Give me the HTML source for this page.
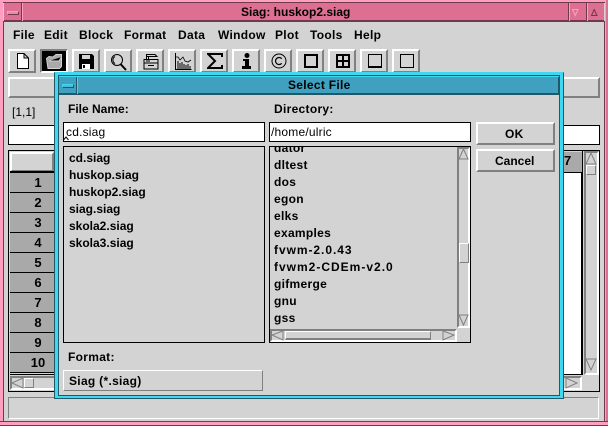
<!DOCTYPE html>
<html><head><meta charset="utf-8"><style>
html,body{margin:0;padding:0}
body{width:608px;height:426px;overflow:hidden;background:#d3d3d3;position:relative;font:bold 12px/14px "Liberation Sans",sans-serif;color:#000}
div,span,svg{position:absolute;box-sizing:border-box}
span{white-space:nowrap}
.b{border:2px solid;border-color:#fff #808080 #808080 #fff;background:#d3d3d3}
.k{border:1px solid #000}
.w{background:#fff}
.n{font-weight:normal}
.r{left:10px;width:44px;height:20px;background:#a9a9a9;border-bottom:1px solid #000;text-align:center;line-height:19px;padding-left:12px;font-size:13px}
.t{letter-spacing:.3px}
.a path{fill:#d3d3d3;stroke:#808080}
</style></head><body>

<!-- main window frame -->
<div style="left:0;top:0;width:608px;height:426px;background:#d3d3d3"></div>
<div style="left:0;top:0;width:608px;height:3px;background:#ff9ec0"></div>
<div style="left:0;top:2px;width:608px;height:1px;background:#703a4c"></div>
<div style="left:0;top:0;width:3px;height:426px;background:#ff9ec0"></div>
<div style="left:3px;top:21px;width:1px;height:400px;background:#703a4c"></div>
<div style="left:605px;top:0;width:3px;height:426px;background:#dd7092;border-left:1px solid #ff9ec0"></div>
<div style="left:604px;top:21px;width:1px;height:400px;background:#703a4c"></div>
<div style="left:0;top:421px;width:608px;height:5px;background:#ff9ec0;border-top:1px solid #703a4c;border-bottom:1px solid #703a4c"></div>

<!-- titlebar -->
<div style="left:4px;top:3px;width:600px;height:19px;background:#dd7092;border-bottom:2px solid #703a4c"></div>
<div style="left:21px;top:3px;width:1px;height:18px;background:#703a4c"></div>
<div style="left:22px;top:3px;width:1px;height:18px;background:#ff9ec0"></div>
<div style="left:7px;top:11px;width:12px;height:4px;background:#e88aa8;border:1px solid;border-color:#ff9ec0 #703a4c #703a4c #ff9ec0"></div>
<span style="left:241px;top:5px;font-size:12px;line-height:15px">Siag: huskop2.siag</span>
<div style="left:568px;top:3px;width:1px;height:18px;background:#703a4c"></div>
<div style="left:569px;top:3px;width:1px;height:18px;background:#ff9ec0"></div>
<div style="left:586px;top:3px;width:1px;height:18px;background:#703a4c"></div>
<div style="left:587px;top:3px;width:1px;height:18px;background:#ff9ec0"></div>
<svg style="left:572px;top:9px" width="32" height="8"><path d="M.5.5H6L3.2 6.5z" fill="none" stroke="#ff9ec0"/><path d="M19.5 6.5H25L22.2.5z" fill="none" stroke="#703a4c"/></svg>

<!-- menu -->
<span class="t" style="left:13px;top:28px">File</span>
<span class="t" style="left:44px;top:28px">Edit</span>
<span class="t" style="left:79px;top:28px">Block</span>
<span class="t" style="left:124px;top:28px">Format</span>
<span class="t" style="left:178px;top:28px">Data</span>
<span class="t" style="left:218px;top:28px">Window</span>
<span class="t" style="left:275px;top:28px">Plot</span>
<span class="t" style="left:310px;top:28px">Tools</span>
<span class="t" style="left:354px;top:28px">Help</span>

<!-- toolbar -->
<div class="b" style="left:8px;top:49px;width:28px;height:24px"><svg style="left:6px;top:2px" width="14" height="16"><path d="M1.5.5H8L12.5 5V15.5H1.5zM8 .5V5H12.5" fill="#fff" stroke="#000"/></svg></div>
<div style="left:40px;top:49px;width:28px;height:24px;border:2px solid;border-color:#808080 #fff #fff #808080;background:#000"><svg style="left:4px;top:2px" width="18" height="17"><path d="M2 15.5L.5 5.5 3 3.5 7 4 10 1.5 15.5 1.5V13.5L13.5 15.5z M3 8H13L15.5 4" fill="#a9a9a9" stroke="#d3d3d3"/></svg></div>
<div class="b" style="left:72px;top:49px;width:28px;height:24px"><svg style="left:5px;top:3px" width="15" height="15"><path d="M0 0H13L15 2V15H0z" fill="#000"/><path d="M3 1H11V5H3z" fill="#d3d3d3"/><path d="M3 10H11V15H3z" fill="#fff"/><path d="M4 11H6V14H4z"/></svg></div>
<div class="b" style="left:104px;top:49px;width:28px;height:24px"><svg style="left:4px;top:2px" width="18" height="18"><circle cx="7" cy="7" r="5.5" fill="none" stroke="#000"/><path d="M5 3.5A4 4 0 0 0 5 10.5" fill="none" stroke="#000"/><path d="M10.5 11L16 17" stroke="#000" stroke-width="2"/></svg></div>
<div class="b" style="left:136px;top:49px;width:28px;height:24px"><svg style="left:5px;top:2px" width="16" height="18"><path d="M3.5 6V1.5H12L14 3.5H5.5V6M1 6.5H15V16H1z M1 10H15 M4 3.5H10" fill="none" stroke="#000"/><path d="M3 8H7" stroke="#000"/><path d="M5 12.5H11" stroke="#000"/></svg></div>
<div class="b" style="left:168px;top:49px;width:28px;height:24px"><svg style="left:5px;top:2px" width="17" height="17"><path d="M.5 0V16.5H16.5" fill="none" stroke="#000"/><path d="M1 4L3 4 5 7 8 4 10 8 13 9 16 7" fill="none" stroke="#000" stroke-width=".8"/><path d="M3 16V8M5 16V10M7 16V9M9 16V11M11 16V12M13 16V11M15 16V13" stroke="#000"/></svg></div>
<div class="b" style="left:200px;top:49px;width:28px;height:24px"><svg style="left:5px;top:2px" width="16" height="16"><path d="M15 4V1H1L8 8 1 15H15V12" fill="none" stroke="#000" stroke-width="2"/></svg></div>
<div class="b" style="left:232px;top:49px;width:28px;height:24px"><svg style="left:6px;top:2px" width="14" height="16"><circle cx="7" cy="2.5" r="2.5"/><path d="M3 6H9V13H11V16H2V13H5V8H3z"/></svg></div>
<div class="b" style="left:264px;top:49px;width:28px;height:24px"><svg style="left:5px;top:2px" width="16" height="16"><circle cx="8" cy="8" r="7" fill="none" stroke="#000"/><path d="M10.7 5.7A3.5 3.5 0 1 0 10.7 10.3" fill="none" stroke="#000" stroke-width="1.2"/></svg></div>
<div class="b" style="left:296px;top:49px;width:28px;height:24px"><div style="left:6px;top:3px;width:14px;height:14px;border:2px solid #000"></div></div>
<div class="b" style="left:328px;top:49px;width:28px;height:24px"><div style="left:6px;top:3px;width:14px;height:14px;border:2px solid #000"></div><div style="left:12px;top:3px;width:2px;height:14px;background:#000"></div><div style="left:6px;top:9px;width:14px;height:2px;background:#000"></div></div>
<div class="b" style="left:360px;top:49px;width:28px;height:24px"><div style="left:6px;top:3px;width:14px;height:14px;border:1px solid #000;border-bottom:2px solid #000"></div></div>
<div class="b" style="left:392px;top:49px;width:28px;height:24px"><div style="left:6px;top:3px;width:14px;height:14px;border:1px solid #000"></div></div>

<!-- second row, behind dialog -->
<div class="b" style="left:8px;top:77px;width:592px;height:21px"></div>
<span class="n" style="left:12px;top:105px">[1,1]</span>
<div class="k w" style="left:8px;top:125px;width:592px;height:20px"></div>

<!-- grid -->
<div class="k" style="left:8px;top:150px;width:592px;height:242px"></div>
<div class="b" style="left:10px;top:152px;width:44px;height:20px;border-bottom-width:2px"></div>
<div style="left:10px;top:171px;width:572px;height:2px;background:#000"></div>
<div class="r" style="top:173px">1</div>
<div class="r" style="top:193px">2</div>
<div class="r" style="top:213px">3</div>
<div class="r" style="top:233px">4</div>
<div class="r" style="top:253px">5</div>
<div class="r" style="top:273px">6</div>
<div class="r" style="top:293px">7</div>
<div class="r" style="top:313px">8</div>
<div class="r" style="top:333px">9</div>
<div class="r" style="top:353px">10</div>
<div style="left:10px;top:374px;width:572px;height:1px;background:#000"></div>
<div style="left:564px;top:152px;width:18px;height:20px;background:#a9a9a9"><span style="left:0;top:2px;font-size:13px">7</span></div>
<div style="left:564px;top:173px;width:18px;height:202px;background:#fff;border-right:1px solid #000;border-bottom:1px solid #000"></div>
<div style="left:582px;top:150px;width:1px;height:225px;background:#000"></div>
<!-- main scrollbars -->
<div style="left:584px;top:151px;width:15px;height:224px;border:2px solid;border-color:#808080 #fff #fff #808080"></div>
<svg class="a" style="left:585px;top:152px" width="14" height="14"><path d="M1 12L6 1 11 12z"/></svg>
<div class="b" style="left:586px;top:165px;width:10px;height:10px;border-width:1px"></div>
<svg class="a" style="left:585px;top:358px" width="14" height="14"><path d="M1 1L6 12 11 1z"/></svg>
<div style="left:10px;top:376px;width:572px;height:14px;border:2px solid;border-color:#808080 #fff #fff #808080"></div>
<svg class="a" style="left:11px;top:377px" width="14" height="12"><path d="M12 1L1 6 12 11z"/></svg>
<div class="b" style="left:24px;top:378px;width:10px;height:10px;border-width:1px"></div>
<svg class="a" style="left:565px;top:377px" width="14" height="12"><path d="M1 1L12 6 1 11z"/></svg>

<div style="left:8px;top:397px;width:591px;height:22px;border:1px solid;border-color:#808080 #fff #fff #808080"></div>

<!-- dialog -->
<div style="left:54px;top:72px;width:510px;height:327px;background:#d3d3d3;border:1px solid #205868;border-top-color:#40d8f0"></div>
<div style="left:55px;top:73px;width:508px;height:325px;border:3px solid #40d8f0"></div>
<div style="left:58px;top:75px;width:502px;height:321px;border:1px solid #205868"></div>
<div style="left:59px;top:76px;width:500px;height:1px;background:#40d8f0"></div>
<div style="left:59px;top:77px;width:500px;height:18px;background:#40a0c0;border-bottom:2px solid #205868;border-right:1px solid #205868"></div>
<div style="left:76px;top:77px;width:1px;height:17px;background:#205868"></div>
<div style="left:77px;top:77px;width:1px;height:17px;background:#40d8f0"></div>
<div style="left:62px;top:84px;width:12px;height:4px;background:#50b8d8;border:1px solid;border-color:#40d8f0 #205868 #205868 #40d8f0"></div>
<span class="t" style="left:288px;top:78px;font-size:12px">Select File</span>

<span style="left:68px;top:102px">File Name:</span>
<span class="t" style="left:274px;top:102px">Directory:</span>

<div class="k w" style="left:63px;top:122px;width:202px;height:20px"></div>
<span class="n" style="left:66px;top:125px;letter-spacing:.2px">cd.siag</span>
<svg style="left:63px;top:136px" width="7" height="5"><path d="M.5 4L3 1 5.5 4" fill="none" stroke="#000"/></svg>
<div class="k w" style="left:269px;top:122px;width:202px;height:20px"></div>
<span class="n" style="left:271px;top:125px;letter-spacing:.2px">/home/ulric</span>

<div class="b" style="left:476px;top:122px;width:79px;height:23px"></div>
<span class="t" style="left:505px;top:127px">OK</span>
<div class="b" style="left:476px;top:149px;width:79px;height:23px"></div>
<span style="left:495px;top:154px">Cancel</span>

<div class="k" style="left:63px;top:146px;width:202px;height:197px"></div>
<span style="left:69px;top:151px">cd.siag</span>
<span style="left:69px;top:168px">huskop.siag</span>
<span style="left:69px;top:185px">huskop2.siag</span>
<span style="left:69px;top:202px">siag.siag</span>
<span style="left:69px;top:219px">skola2.siag</span>
<span style="left:69px;top:236px">skola3.siag</span>

<div style="left:270px;top:147px;width:187px;height:182px;overflow:hidden">
<span class="t" style="left:4px;top:-6px">dator</span>
<span class="t" style="left:4px;top:11px">dltest</span>
<span class="t" style="left:4px;top:28px">dos</span>
<span class="t" style="left:4px;top:45px">egon</span>
<span class="t" style="left:4px;top:62px">elks</span>
<span class="t" style="left:4px;top:79px">examples</span>
<span style="left:4px;top:96px;letter-spacing:.95px">fvwm-2.0.43</span>
<span style="left:4px;top:113px;letter-spacing:1px">fvwm2-CDEm-v2.0</span>
<span class="t" style="left:4px;top:130px">gifmerge</span>
<span class="t" style="left:4px;top:147px">gnu</span>
<span class="t" style="left:4px;top:164px">gss</span>
</div>
<div class="k" style="left:269px;top:146px;width:202px;height:197px"></div>
<div style="left:457px;top:147px;width:13px;height:181px;border:2px solid;border-color:#808080 #fff #fff #808080"></div>
<div style="left:270px;top:329px;width:187px;height:13px;border:2px solid;border-color:#808080 #fff #fff #808080"></div>
<svg class="a" style="left:458px;top:148px" width="12" height="13"><path d="M1 11L5.5 1 10 11z"/></svg>
<svg class="a" style="left:458px;top:314px" width="12" height="13"><path d="M1 1L5.5 11 10 1z"/></svg>
<div class="b" style="left:459px;top:243px;width:10px;height:20px;border-width:1px"></div>
<svg class="a" style="left:271px;top:330px" width="14" height="11"><path d="M12 1L1 5 12 10z"/></svg>
<svg class="a" style="left:442px;top:330px" width="14" height="11"><path d="M1 1L12 5 1 10z"/></svg>
<div class="b" style="left:285px;top:331px;width:146px;height:9px;border-width:1px 1px 2px 1px"></div>

<span class="t" style="left:68px;top:350px">Format:</span>
<div style="left:63px;top:370px;width:200px;height:21px;border:1px solid;border-color:#fff #808080 #808080 #fff"></div>
<span class="t" style="left:69px;top:374px">Siag (*.siag)</span>
</body></html>
